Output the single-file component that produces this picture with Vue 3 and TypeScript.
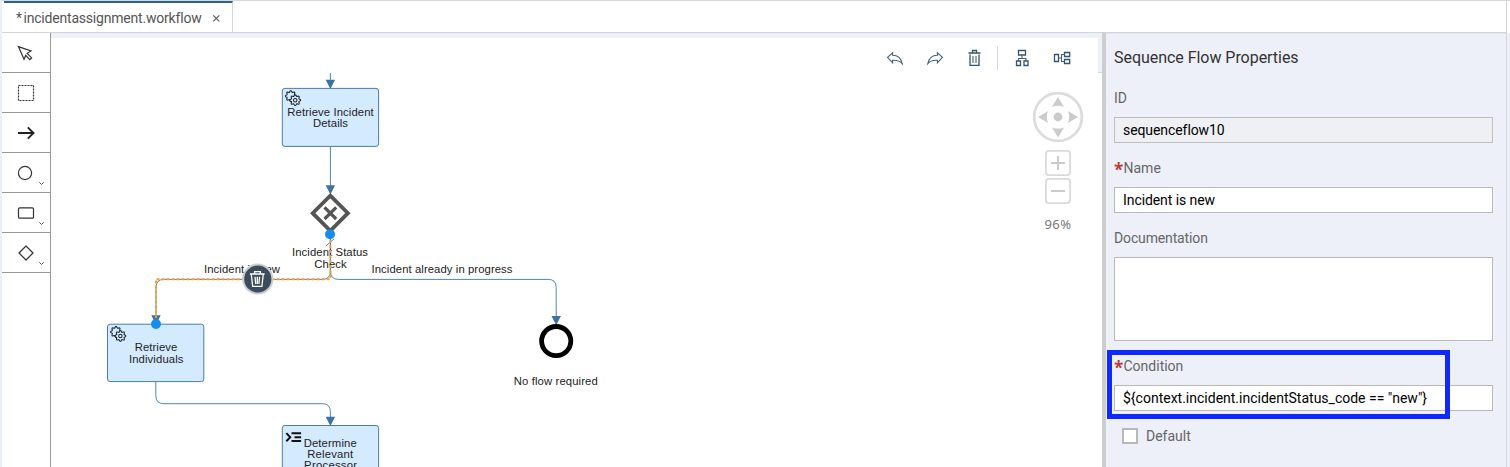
<script setup lang="ts">
interface Label { text: string; x: number; y: number; w: number }
interface Field { id: string; label: string; value: string; required?: boolean; readonly?: boolean; tall?: boolean }

// Closed outline of a small cog wheel with rounded teeth
function gear(cx: number, cy: number, r: number, teeth: number): string {
  const steps = teeth * 8
  const points: string[] = []
  for (let i = 0; i < steps; i++) {
    const a = (i / steps) * Math.PI * 2
    const d = r + 0.75 * Math.cos(a * teeth)
    points.push(`${(cx + d * Math.cos(a)).toFixed(2)} ${(cy + d * Math.sin(a)).toFixed(2)}`)
  }
  return `M${points.join('L')}Z`
}
const frontGear = gear(12.9, 11.8, 4.7, 8)
const backGear = gear(8.5, 7.7, 4.7, 8)

const tasks = [
  { x: 282.3, y: 88.4, h: 58, service: true },
  { x: 107.5, y: 324.2, h: 57.4, service: true },
  { x: 282.3, y: 425.5, h: 58, service: false },
]

const arrows = [
  [330.4, 89], [330.4, 194.5], [556.2, 325.3], [156, 324.5], [330.4, 426],
]

const labels: Label[] = [
  { text: 'Retrieve Incident', x: 330.5, y: 115.8, w: 86.5 },
  { text: 'Details', x: 330.5, y: 127, w: 35 },
  { text: 'Incident Status', x: 330, y: 256, w: 76 },
  { text: 'Check', x: 330.5, y: 268, w: 32.5 },
  { text: 'Incident is new', x: 242, y: 272.9, w: 76 },
  { text: 'Incident already in progress', x: 442, y: 272.9, w: 141 },
  { text: 'Retrieve', x: 156, y: 350.5, w: 42.5 },
  { text: 'Individuals', x: 156.2, y: 362.5, w: 54.5 },
  { text: 'No flow required', x: 555.8, y: 384.8, w: 84 },
  { text: 'Determine', x: 330.2, y: 446.8, w: 53 },
  { text: 'Relevant', x: 330.2, y: 457.9, w: 46 },
  { text: 'Processor', x: 330.6, y: 469, w: 53 },
]

const fields: Field[] = [
  { id: 'id', label: 'ID', value: 'sequenceflow10', readonly: true },
  { id: 'name', label: 'Name', value: 'Incident is new', required: true },
  { id: 'doc', label: 'Documentation', value: '', tall: true },
  { id: 'cond', label: 'Condition', value: '${context.incident.incidentStatus_code == "new"}', required: true },
]
</script>

<template>
  <div class="app">
    <header class="tabs">
      <div class="tab">
        <span class="star">*</span><span class="tab-name">incidentassignment.workflow</span>
        <svg class="close" width="9" height="9" viewBox="0 0 9 9"><path d="M1.3 1.3l6 6M7.3 1.3l-6 6" /></svg>
      </div>
    </header>
    <main class="body">
      <nav class="palette">
        <div class="tool"><svg viewBox="0 0 48 39"><path d="M16.4 13.6L29 18L25.2 20.3L29.6 24.9L27.8 26.6L23.7 22.4L22 26.2Z" /></svg></div>
        <div class="tool"><svg viewBox="0 0 48 39"><rect x="16.5" y="12.5" width="15" height="15" stroke-dasharray="2 1" /></svg></div>
        <div class="tool"><svg viewBox="0 0 48 39"><path class="bold" d="M16 20H31.5M25.8 14.4L31.5 20L25.8 25.6" /></svg></div>
        <div class="tool"><svg viewBox="0 0 48 39"><circle cx="23" cy="20" r="6.6" /><path class="thin" d="M37.3 29.3l2.2 2.2l2.2-2.2" /></svg></div>
        <div class="tool"><svg viewBox="0 0 48 39"><rect x="16.5" y="14.8" width="15" height="10.4" rx="1.3" /><path class="thin" d="M37.3 29.3l2.2 2.2l2.2-2.2" /></svg></div>
        <div class="tool"><svg viewBox="0 0 48 39"><path d="M24 13L31 20L24 27L17 20Z" stroke-linejoin="round" /><path class="thin" d="M37.3 29.3l2.2 2.2l2.2-2.2" /></svg></div>
      </nav>

      <section class="canvas">
        <svg class="diagram" width="1051" height="434" viewBox="51 33 1051 434">
          <g class="flow">
            <path d="M330.4 73V82" />
            <path d="M330.4 147V188" />
            <path d="M330.4 239V271Q330.4 279.4 338.4 279.4H548.2Q556.2 279.4 556.2 287.4V318" />
            <path d="M330.4 239V271Q330.4 279.4 322.4 279.4H164Q156 279.4 156 287.4V318" />
            <path d="M325.8 246L334 239" />
            <path d="M155.8 382V395.6Q155.8 403.7 163.8 403.7H322.4Q330.4 403.7 330.4 411.7V419" />
          </g>
          <path v-for="(a, i) in arrows" :key="i" class="head" :d="`M${a[0]} ${a[1]}l-4.7 -9.2h9.4Z`" />
          <g v-for="(t, i) in tasks" :key="i" :transform="`translate(${t.x} ${t.y})`">
            <rect class="task" width="96.3" :height="t.h" rx="2.6" />
            <template v-if="t.service">
              <path class="gear" :d="backGear" />
              <path class="gear" :d="frontGear" />
              <circle class="gear" cx="12.9" cy="11.8" r="1.7" />
            </template>
            <path v-else class="script" d="M4 7.6L8 11.7L4 15.8M9.2 7.8H18.8M12.2 11.7H18.8M9.2 15.6H18.8" />
          </g>
          <path class="gateway" d="M330.3 195.6L347.9 213.2L330.3 230.8L312.7 213.2Z" />
          <path class="gateway-x" d="M324.5 207.3L336.2 219M336.2 207.3L324.5 219" />
          <circle class="end" cx="556.2" cy="341.1" r="14.6" />
          <text v-for="l in labels" :key="l.text" :x="l.x" :y="l.y" :textLength="l.w">{{ l.text }}</text>
          <path class="selected" d="M330.4 240V279.2H156V318" />
          <circle class="handle" cx="330" cy="234.2" r="5" />
          <circle class="handle" cx="156" cy="324" r="5" />
          <circle class="delete" cx="257.8" cy="279" r="14.6" />
          <g class="delete-icon">
            <path d="M249.9 274H264.7M254.6 273.5V271.6H260.4V273.5M251.3 274.5L252.7 286.4H261.9L263.2 274.5M255 276.7L255.7 284M259.6 276.7L258.9 284M257.3 276.7V284" />
          </g>
        </svg>

        <div class="actions">
          <svg width="20" height="24" viewBox="0 0 20 24"><path d="M2.5 11.4L7.6 6.8V9.3C12 9.3 16 12 17.2 17.7C14.5 14.6 11 13.9 7.6 14.3V16.9Z" /></svg>
          <svg width="20" height="24" viewBox="0 0 20 24"><path d="M17.5 11.4L12.4 6.8V9.3C8 9.3 4 12 2.8 17.7C5.5 14.6 9 13.9 12.4 14.3V16.9Z" /></svg>
          <svg width="20" height="24" viewBox="0 0 20 24"><path class="strong" d="M3.5 7H15.5M7.5 6.5V4.5H11.5V6.5M5 8.5V19.3H14V8.5" /><path d="M8 10V17M11 10V17" /></svg>
          <i class="divider"></i>
          <svg width="20" height="24" viewBox="0 0 20 24"><path class="strong" d="M6.5 4.5H13.5V9H6.5ZM4.5 15H8.5V19.5H4.5ZM12 15H16V19.5H12Z" /><path d="M10 9V12.5M6.5 15V12.5H14V15" /></svg>
          <svg width="20" height="24" viewBox="0 0 20 24"><path class="strong" d="M2.5 8.5H6.5V15.5H2.5ZM12.5 6.5H17.7V10.5H12.5ZM12.5 13.5H17.7V17.5H12.5Z" /><path d="M6.5 12H9.5M12.5 8.5H9.5V15.5H12.5" /></svg>
        </div>

        <div class="zoomer">
          <svg width="52" height="112" viewBox="1032 91 52 112" overflow="visible">
            <circle class="ring" cx="1058" cy="117" r="23.9" />
            <path class="dir" d="M1058 97l6 10q-6 -2.4-12 0ZM1058 137.4l6-10q-6 2.4-12 0ZM1038 117l10-6q-2.4 6 0 12ZM1078 117l-10-6q2.4 6 0 12Z" />
            <circle class="dir" cx="1058" cy="117" r="4.4" />
            <rect class="box" x="1045.9" y="150.9" width="24.2" height="24.2" rx="3" />
            <rect class="box" x="1045.9" y="178.9" width="24.2" height="24.2" rx="3" />
            <path class="sign" d="M1051 163H1065M1058 156V170M1051 191H1065" />
          </svg>
          <span>96%</span>
        </div>
      </section>

      <div class="splitter"></div>

      <aside class="props">
        <h2>Sequence Flow Properties</h2>
        <div v-for="f in fields" :key="f.id" class="field">
          <label><b v-if="f.required">*</b><span :class="'l-' + f.id">{{ f.label }}</span></label>
          <div class="input" :class="{ readonly: f.readonly, tall: f.tall }"><span :class="'v-' + f.id">{{ f.value }}</span></div>
        </div>
        <div class="check"><i></i><span>Default</span></div>
        <div class="highlight"></div>
      </aside>
      <div class="gutter"></div>
    </main>
  </div>
</template>

<style>
body { margin: 0; overflow: hidden; }
</style>

<style scoped>
.app {
  box-sizing: border-box; width: 1510px; height: 467px; overflow: hidden;
  display: flex; flex-direction: column; background: #fff;
  border-left: 2px solid #ebf0f8; border-top: 1px solid #d6d8db;
  font-family: Roboto, "Liberation Sans", sans-serif; font-size: 14px; color: #000;
}
.tabs {
  flex: none; box-sizing: border-box; height: 32px; display: flex;
  border-bottom: 1px solid #d3d5d9; margin-right: 3px; border-right: 1px solid #d3d5d9; padding-left: 2px;
}
.tab {
  box-sizing: border-box; width: 229px; display: flex; align-items: center; padding-left: 12px;
  border-top: 2px solid #2f6087; border-right: 1px solid #d3d5d9; color: #555; line-height: 30px;
}
.star { width: 7.5px; }
.tab-name { width: 188.5px; letter-spacing: -0.2px; white-space: nowrap; }
.close { fill: none; stroke: #5c5c5c; stroke-width: 1.2; margin-top: 2px; }
.body { flex: 1; display: flex; min-height: 0; }
.palette { width: 48px; border-right: 1px solid #999; }
.tool { height: 39px; border-bottom: 1px solid #999; }
.tool svg { display: block; width: 48px; height: 39px; fill: none; stroke: #333; stroke-width: 1.2; }
.tool .bold { stroke-width: 1.9; stroke: #222; }
.tool .thin { stroke-width: 1; stroke: #555; }

.canvas { position: relative; width: 1051px; display: flex; flex-direction: column; align-items: flex-end; }
.diagram { position: absolute; left: 0; top: 0; }
.diagram text {
  font-family: "Liberation Sans", Arial, sans-serif; font-size: 11.3px; fill: #222; text-anchor: middle;
}
.flow path { fill: none; stroke: #4f86b5; stroke-width: 1; }
.head { fill: #3c72a5; }
.task { fill: #d4eaff; stroke: #4a7cab; stroke-width: 1; }
.gear { fill: #d4eaff; stroke: #1d252c; stroke-width: 1.05; }
.script { fill: none; stroke: #111; stroke-width: 2; }
.gateway { fill: #fff; stroke: #555; stroke-width: 3.8; }
.gateway-x { stroke: #555; stroke-width: 3.2; }
.end { fill: #fff; stroke: #000; stroke-width: 4.8; }
.selected { fill: none; stroke: #ff9a2e; stroke-width: 2; stroke-dasharray: 3 2; }
.handle { fill: #148df0; }
.delete { fill: #3b4c5c; stroke: #c9cdd1; stroke-width: 2; }
.delete-icon path { fill: none; stroke: #fff; stroke-width: 1.3; }

.actions {
  position: relative; box-sizing: border-box; width: 100%; height: 40px; border-top: 5px solid #ecf1f9;
  border-right: 4px solid #ecf1f9; border-bottom: 0; display: flex; align-items: center;
  justify-content: flex-end; gap: 20px; padding: 5px 26px 0 0;
}
.actions::after { content: ""; position: absolute; right: -4px; bottom: 0; width: 4px; height: 1px; background: #c5d9ee; }
.actions svg { fill: none; stroke: #45617b; stroke-width: 1.1; }
.actions .strong { stroke: #34536f; stroke-width: 1.3; }
.divider { width: 1px; height: 24px; background: #d5d7da; margin: 0 -6px 0 -8px; }
.zoomer { position: relative; width: 52px; margin: 18px 18px 0 0; text-align: center; }
.zoomer svg { display: block; fill: none; }
.zoomer .ring { stroke: #dcdcdc; stroke-width: 2.7; }
.zoomer .dir { fill: #cbcbcb; }
.zoomer .box { stroke: #dadada; stroke-width: 1.8; }
.zoomer .sign { stroke: #cacaca; stroke-width: 1.9; }
.zoomer span { display: block; margin-top: 12px; font: 13px/18px "Noto Sans", sans-serif; letter-spacing: 0.5px; color: #777; }

.splitter { width: 4px; background: #cdcdcd; }
.props {
  position: relative; box-sizing: border-box; width: 400px; background: #edf0f9; border-top: 1px solid #e2e4ea;
  padding: 0 13px 0 8px;
}
.gutter { flex: 1; border-left: 1px solid #d3d5d9; background: #edf0f9; }
h2 { margin: 14px 0 20px; font-size: 16px; line-height: 20px; font-weight: 400; letter-spacing: -0.04px; color: #333; white-space: nowrap; }
.field { margin-bottom: 15px; }
label { display: flex; height: 20px; line-height: 20px; color: #666; }
label b { width: 9.5px; color: #bb3a3a; font: bold 17px/23px "Open Sans", sans-serif; }
.l-doc { letter-spacing: -0.14px; }
.v-id, .v-name { letter-spacing: -0.08px; }
.input {
  box-sizing: border-box; margin-top: 9px; height: 26px; border: 1px solid #b9b9b9; background: #fff;
  padding-left: 8px; line-height: 24px; white-space: nowrap;
}
.input.readonly { background: #eff0f3; border-color: #bfbfbf; }
.input.tall { height: 84px; }
.check { display: flex; align-items: center; padding-left: 8px; height: 20px; color: #666; }
.check i { box-sizing: border-box; width: 16px; height: 16px; border: 2px solid #b8b8b8; background: #fff; margin-right: 8px; }
.highlight {
  position: absolute; left: 1px; top: 316px; box-sizing: border-box; width: 343px; height: 69px;
  border: 5px solid #0f28ff;
}
</style>
